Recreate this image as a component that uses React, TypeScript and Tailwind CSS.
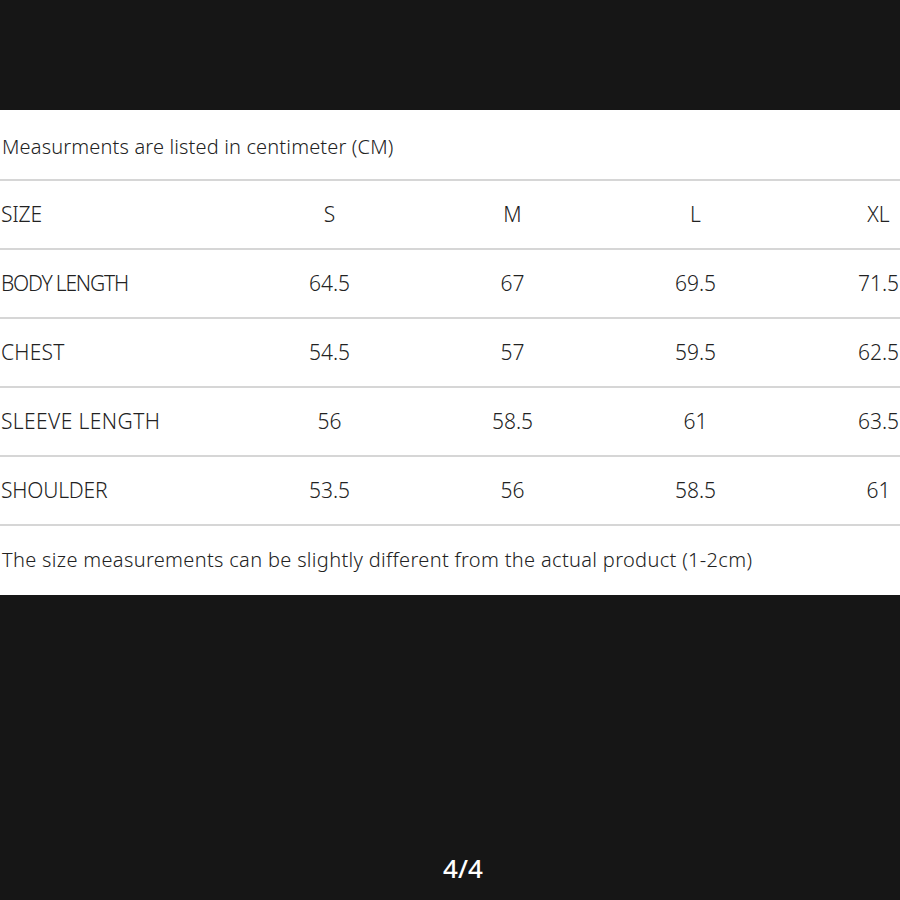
import React from 'react';

const rows = [
  { label: 'SIZE', values: ['S', 'M', 'L', 'XL'], track: 'tracking-[-0.2px]' },
  { label: 'BODY LENGTH', values: ['64.5', '67', '69.5', '71.5'], track: 'tracking-[-1.2px]' },
  { label: 'CHEST', values: ['54.5', '57', '59.5', '62.5'], track: 'tracking-[0.2px]' },
  { label: 'SLEEVE LENGTH', values: ['56', '58.5', '61', '63.5'], track: 'tracking-[0.4px]' },
  { label: 'SHOULDER', values: ['53.5', '56', '58.5', '61'], track: 'tracking-[-0.2px]' },
];

const App: React.FC = () => {
  return (
    <div className="w-[900px] h-[900px] bg-[#161616] flex flex-col overflow-hidden" style={{ fontFamily: '"Noto Sans", "Open Sans", sans-serif' }}>
      <div className="h-[110px]"></div>

      {/* Size chart */}
      <div className="bg-white text-[#222] font-light overflow-hidden">
        <div className="h-[71px] flex items-center pl-[2px] pt-[4px] text-[20px] tracking-[0.15px] border-b-2 border-[#d6d6d6]">
          Measurments are listed in centimeter (CM)
        </div>
        {rows.map(row => (
          <div key={row.label} className="h-[69px] grid grid-cols-[238px_183px_183px_183px_183px] items-center border-b-2 border-[#d6d6d6]">
            <span className={`pl-[1px] whitespace-nowrap text-[21px] ${row.track}`}>{row.label}</span>
            {row.values.map((v, i) => (
              <span key={i} className="text-center text-[21px]">{v}</span>
            ))}
          </div>
        ))}
        <div className="h-[69px] flex items-center pl-[2px] pb-[2px] text-[20px] tracking-[0.33px]">
          The size measurements can be slightly different from the actual product (1-2cm)
        </div>
      </div>

      <div className="flex-1 flex items-end justify-center pb-[12px]">
        <span className="text-white text-[26px] font-medium pl-[26px]">4/4</span>
      </div>
    </div>
  );
};

export default App;
